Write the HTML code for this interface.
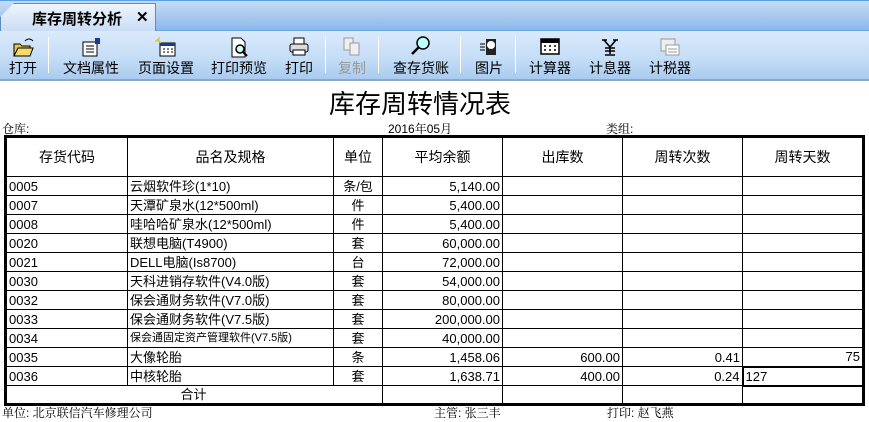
<!DOCTYPE html>
<html><head><meta charset="utf-8"><style>
*{margin:0;padding:0;box-sizing:border-box}
body{width:869px;height:422px;overflow:hidden;background:#fff;font-family:"Liberation Sans","Noto Sans CJK SC",sans-serif;position:relative}
.tabbar{position:absolute;left:0;top:0;width:869px;height:31px;background:linear-gradient(#c6dcf4,#8ab8ea);border-top:1px solid #5aa0e8;border-bottom:1px solid #6aa6e0}
.tab{position:absolute;left:0;top:2px;width:156px;height:29px;background:linear-gradient(#eef4fc,#c8dcf4);border:1px solid #5d8cc0;border-bottom:none;clip-path:polygon(14px 0,100% 0,100% 100%,0 100%,0 14px)}
.tab span{position:absolute;left:31px;top:4px;font-size:15px;font-weight:bold;color:#000}
.tab b{position:absolute;left:135px;top:4px;font-size:15px}
.tb{position:absolute;left:0;top:31px;width:869px;height:50px;background:linear-gradient(#dbeafb,#c3dcf6 60%,#a9cbef);border-bottom:2px solid #8da8c4}
.btn{position:absolute;top:0;height:48px;text-align:center;font-size:14px;color:#000}
.btn .ic{height:28px;position:relative}
.btn .lb{position:absolute;top:27px;left:-6px;right:-6px;white-space:nowrap}
.sep{position:absolute;top:6px;width:1px;height:36px;background:#8fb0d0;border-right:1px solid #fff}
.t{position:absolute;font-size:12px;white-space:nowrap;font-family:"Liberation Sans","Noto Serif CJK SC",serif}
table{position:absolute;left:4px;top:135px;border-collapse:collapse;border:3px solid #000;font-size:13px;font-family:"Liberation Sans","Noto Sans CJK SC",sans-serif}
td{border:1px solid #000;height:19px;padding:0 2px;line-height:17px;white-space:nowrap;overflow:hidden}
tr.h td{height:40px;text-align:center;font-size:14px}
.c{text-align:center}.r{text-align:right}
</style></head><body>
<div class="tabbar"><div class="tab"><span>库存周转分析</span><b>✕</b></div></div>
<div class="tb">
 <div class="btn" style="left:5px;width:36px"><div class="ic"><svg width="24" height="22" style="margin-top:5px"><path d="M3 8h6l2 2h8v10H3z" fill="#e8c44a" stroke="#000"/><path d="M3 20l4-8h15l-3 8z" fill="#f6da6a" stroke="#000"/><path d="M14 5q4-4 8 0" stroke="#000" fill="none"/></svg></div><div class="lb">打开</div></div>
 <div class="sep" style="left:48px"></div>
 <div class="btn" style="left:58px;width:66px"><div class="ic"><svg width="22" height="22" style="margin-top:5px"><rect x="3" y="6" width="14" height="14" fill="#fff" stroke="#000"/><path d="M6 10h8M6 13h8M6 16h8" stroke="#000"/><rect x="15" y="2" width="5" height="6" fill="#1a3a8a"/></svg></div><div class="lb">文档属性</div></div>
 <div class="btn" style="left:133px;width:66px"><div class="ic"><svg width="24" height="22" style="margin-top:5px"><rect x="6" y="7" width="15" height="13" fill="#fff" stroke="#000"/><rect x="6" y="7" width="15" height="3" fill="#1a3a8a"/><path d="M9 13h2M13 13h2M17 13h2M9 16h2M13 16h2M17 16h2" stroke="#000"/><path d="M3 3l4 4M5 1v4M1 5h4" stroke="#e0c000"/></svg></div><div class="lb">页面设置</div></div>
 <div class="btn" style="left:208px;width:62px"><div class="ic"><svg width="22" height="22" style="margin-top:5px"><path d="M4 2h9l4 4v15H4z" fill="#fff" stroke="#000"/><circle cx="12" cy="13" r="4" fill="#cfe" stroke="#000" stroke-width="1.5"/><path d="M15 16l4 4" stroke="#000" stroke-width="2"/></svg></div><div class="lb">打印预览</div></div>
 <div class="btn" style="left:282px;width:34px"><div class="ic"><svg width="22" height="22" style="margin-top:5px"><rect x="6" y="2" width="10" height="6" fill="#fff" stroke="#000"/><rect x="2" y="8" width="18" height="8" rx="2" fill="#ddd" stroke="#000"/><rect x="5" y="14" width="12" height="5" fill="#fff" stroke="#000"/></svg></div><div class="lb">打印</div></div>
 <div class="sep" style="left:325px"></div>
 <div class="btn" style="left:334px;width:36px;color:#999"><div class="ic"><svg width="22" height="22" style="margin-top:5px"><rect x="3" y="2" width="9" height="12" fill="#eee" stroke="#999"/><rect x="9" y="7" width="9" height="12" fill="#eee" stroke="#999"/></svg></div><div class="lb">复制</div></div>
 <div class="sep" style="left:378px"></div>
 <div class="btn" style="left:390px;width:62px"><div class="ic"><svg width="22" height="22" style="margin-top:4px"><circle cx="13" cy="8" r="6" fill="#bff" stroke="#000" stroke-width="1.5"/><path d="M9 12l-7 7" stroke="#000" stroke-width="2.5"/></svg></div><div class="lb">查存货账</div></div>
 <div class="sep" style="left:460px"></div>
 <div class="btn" style="left:472px;width:34px"><div class="ic"><svg width="22" height="22" style="margin-top:5px"><path d="M8 3h10v16H8z" fill="#222"/><circle cx="13" cy="9" r="4" fill="#fff"/><path d="M2 8h5M2 11h5M2 14h5" stroke="#000"/></svg></div><div class="lb">图片</div></div>
 <div class="sep" style="left:515px"></div>
 <div class="btn" style="left:527px;width:46px"><div class="ic"><svg width="22" height="22" style="margin-top:5px"><rect x="2" y="3" width="18" height="15" fill="#fff" stroke="#000" stroke-width="1.5"/><rect x="2" y="3" width="18" height="4" fill="#000"/><path d="M5 10h2M10 10h2M15 10h2M5 14h2M10 14h2M15 14h2" stroke="#000" stroke-width="1.5"/></svg></div><div class="lb">计算器</div></div>
 <div class="btn" style="left:587px;width:46px"><div class="ic"><svg width="22" height="22" style="margin-top:5px"><path d="M3 4h5M14 4h5M5 4l6 7 6-7M11 11v7M6 12h10M6 15h10M6 19h10" stroke="#000" stroke-width="1.6" fill="none"/></svg></div><div class="lb">计息器</div></div>
 <div class="btn" style="left:647px;width:46px;"><div class="ic"><svg width="22" height="22" style="margin-top:5px"><rect x="2" y="3" width="14" height="12" fill="#eee" stroke="#999"/><rect x="7" y="9" width="13" height="10" fill="#fff" stroke="#999"/><path d="M9 13h9M9 16h9" stroke="#999"/></svg></div><div class="lb">计税器</div></div>
</div>
<div class="t" style="left:329px;top:84px;font-size:26px;font-family:'Liberation Sans','Noto Sans CJK SC',sans-serif">库存周转情况表</div>
<div class="t" style="left:2px;top:120px">仓库:</div>
<div class="t" style="left:388px;top:120px">2016年05月</div>
<div class="t" style="left:606px;top:120px">类组:</div>
<table>
<colgroup><col style="width:122px"><col style="width:206px"><col style="width:49px"><col style="width:120px"><col style="width:120px"><col style="width:120px"><col style="width:121px"></colgroup>
<tr class="h"><td>存货代码</td><td>品名及规格</td><td>单位</td><td>平均余额</td><td>出库数</td><td>周转次数</td><td>周转天数</td></tr>
<tr><td>0005</td><td>云烟软件珍(1*10)</td><td class="c">条/包</td><td class="r">5,140.00</td><td></td><td></td><td></td></tr>
<tr><td>0007</td><td>天潭矿泉水(12*500ml)</td><td class="c">件</td><td class="r">5,400.00</td><td></td><td></td><td></td></tr>
<tr><td>0008</td><td>哇哈哈矿泉水(12*500ml)</td><td class="c">件</td><td class="r">5,400.00</td><td></td><td></td><td></td></tr>
<tr><td>0020</td><td>联想电脑(T4900)</td><td class="c">套</td><td class="r">60,000.00</td><td></td><td></td><td></td></tr>
<tr><td>0021</td><td>DELL电脑(Is8700)</td><td class="c">台</td><td class="r">72,000.00</td><td></td><td></td><td></td></tr>
<tr><td>0030</td><td>天科进销存软件(V4.0版)</td><td class="c">套</td><td class="r">54,000.00</td><td></td><td></td><td></td></tr>
<tr><td>0032</td><td>保会通财务软件(V7.0版)</td><td class="c">套</td><td class="r">80,000.00</td><td></td><td></td><td></td></tr>
<tr><td>0033</td><td>保会通财务软件(V7.5版)</td><td class="c">套</td><td class="r">200,000.00</td><td></td><td></td><td></td></tr>
<tr><td>0034</td><td style="font-size:11px">保会通固定资产管理软件(V7.5版)</td><td class="c">套</td><td class="r">40,000.00</td><td></td><td></td><td></td></tr>
<tr><td>0035</td><td>大像轮胎</td><td class="c">条</td><td class="r">1,458.06</td><td class="r">600.00</td><td class="r">0.41</td><td class="r">75</td></tr>
<tr><td>0036</td><td>中核轮胎</td><td class="c">套</td><td class="r">1,638.71</td><td class="r">400.00</td><td class="r">0.24</td><td style="border:2px solid #000">127</td></tr>
<tr><td colspan="3" class="c" style="padding-left:0">合计</td><td></td><td></td><td></td><td></td></tr>
</table>
<div class="t" style="left:2px;top:404px">单位: 北京联信汽车修理公司</div>
<div class="t" style="left:434px;top:404px">主管: 张三丰</div>
<div class="t" style="left:607px;top:404px">打印: 赵飞燕</div>
</body></html>
